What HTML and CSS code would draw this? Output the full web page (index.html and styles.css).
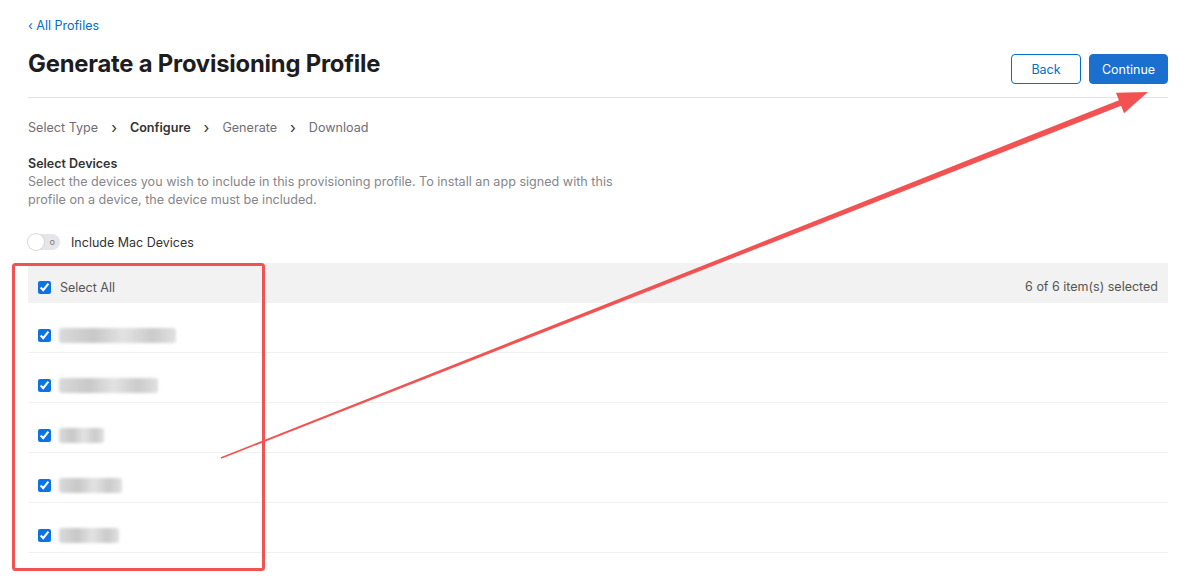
FILE: index.html
```html
<!DOCTYPE html>
<html lang="en">
<head>
    <meta charset="UTF-8">
    <meta name="viewport" content="width=device-width, initial-scale=1.0">
    <title>Generate a Provisioning Profile</title>
    <link rel="stylesheet" href="styles.css">
</head>
<body>
    <div id="page">
        <a class="back-link" href="#">&lsaquo; All Profiles</a>
        <div class="header">
            <h1>Generate a Provisioning Profile</h1>
            <div class="actions">
                <button class="btn btn-outline">Back</button>
                <button class="btn btn-primary">Continue</button>
            </div>
        </div>

        <div class="steps">
            <span>Select Type</span>
            <span class="chev">&rsaquo;</span>
            <span class="current">Configure</span>
            <span class="chev">&rsaquo;</span>
            <span>Generate</span>
            <span class="chev">&rsaquo;</span>
            <span>Download</span>
        </div>

        <div class="section">
            <h3>Select Devices</h3>
            <p>Select the devices you wish to include in this provisioning profile. To install an app signed with this profile on a device, the device must be included.</p>
        </div>

        <label class="toggle-row">
            <span class="toggle"><span class="knob"></span><span class="off">o</span></span>
            Include Mac Devices
        </label>

        <div class="device-table">
            <div class="table-head">
                <label class="check"><input type="checkbox" checked> Select All</label>
                <span class="count">6 of 6 item(s) selected</span>
            </div>
            <div class="row"><input type="checkbox" checked><span class="name" style="width:117px"></span></div>
            <div class="row"><input type="checkbox" checked><span class="name" style="width:99px"></span></div>
            <div class="row"><input type="checkbox" checked><span class="name" style="width:45px"></span></div>
            <div class="row"><input type="checkbox" checked><span class="name" style="width:63px"></span></div>
            <div class="row"><input type="checkbox" checked><span class="name" style="width:60px"></span></div>
        </div>
    </div>

    <!-- markup drawn on top: box round the list and arrow to Continue -->
    <svg class="markup" width="1192" height="587" viewBox="0 0 1192 587">
        <rect x="13.5" y="264.5" width="250" height="305" rx="2" fill="none" stroke="#f25252" stroke-width="3"/>
        <polygon fill="#f25252" points="220.7,457.3 1118.9,100.2 1116,92.8 1148,92 1124,113.2 1121.1,105.8 221.3,458.7"/>
    </svg>
</body>
</html>
```

FILE: styles.css
```css
body {
    margin: 0;
    font-family: Inter, "Noto Sans", sans-serif;
    color: #1d1d1f;
    background: #fff;
}
#page {
    padding: 17px 24px 0 28px;
}
.back-link {
    display: block;
    width: fit-content;
    font-size: 12.5px;
    color: #0070c9;
    text-decoration: none;
    line-height: 18px;
}
.header {
    display: flex;
    justify-content: space-between;
    align-items: flex-start;
    padding: 14px 0 13px;
    border-bottom: 1px solid #e3e3e3;
}
h1 {
    margin: 0;
    font-size: 23.8px;
    font-weight: 700;
    letter-spacing: -0.2px;
    line-height: 30px;
}
.actions {
    display: flex;
    gap: 8px;
    margin-top: 5px;
}
.btn {
    font-family: inherit;
    font-size: 12.5px;
    height: 30px;
    border-radius: 4px;
    cursor: pointer;
}
.btn-outline {
    width: 70px;
    background: #fff;
    color: #0070c9;
    border: 1px solid #0070c9;
}
.btn-primary {
    width: 79px;
    background: #1a6fcf;
    color: #fff;
    border: 1px solid #1a6fcf;
}
.steps {
    display: flex;
    align-items: center;
    gap: 13px;
    margin-top: 21px;
    font-size: 12.6px;
    color: #6e6e73;
    line-height: 18px;
}
.steps .chev {
    color: #333;
    font-size: 15px;
}
.steps .current {
    color: #333;
    font-weight: 600;
}
.section {
    margin-top: 18px;
}
.section h3 {
    margin: 0;
    font-size: 12.5px;
    font-weight: 600;
    color: #333;
    line-height: 18px;
}
.section p {
    margin: 0;
    max-width: 600px;
    font-size: 12.6px;
    line-height: 18px;
    color: #86868b;
}
.toggle-row {
    display: flex;
    align-items: center;
    gap: 11px;
    margin-top: 23px;
    font-size: 12.5px;
    color: #333;
    height: 20px;
}
.toggle {
    position: relative;
    width: 32px;
    height: 16px;
    border-radius: 8px;
    background: #e5e5ea;
    box-sizing: border-box;
}
.toggle .knob {
    position: absolute;
    left: 0;
    top: 0;
    width: 16px;
    height: 16px;
    border-radius: 50%;
    background: #fff;
    box-shadow: 0 0 0 1px #d6d6d6;
}
.toggle .off {
    position: absolute;
    right: 5px;
    top: 0;
    font-size: 9px;
    line-height: 15px;
    color: #777;
}
.device-table {
    margin-top: 11px;
}
.table-head {
    display: flex;
    justify-content: space-between;
    align-items: center;
    height: 40px;
    box-sizing: border-box;
    padding: 6px 10px 0;
    background: #f2f2f2;
    font-size: 12.5px;
    color: #555;
}
.check {
    display: flex;
    align-items: center;
    gap: 9px;
    padding-top: 2px;
}
input[type="checkbox"] {
    margin: 0;
    width: 13px;
    height: 13px;
    accent-color: #0a74e6;
}
.row {
    display: flex;
    align-items: center;
    gap: 8px;
    height: 50px;
    box-sizing: border-box;
    padding: 15px 10px 0;
    border-bottom: 1px solid #f0f0f0;
}
.row .name {
    height: 15px;
    border-radius: 3px;
    background: linear-gradient(90deg, #d9d9d9, #c8c8c8 30%, #e2e2e2 55%, #cbcbcb 80%, #e0e0e0);
    filter: blur(1.5px);
}
.markup {
    position: absolute;
    left: 0;
    top: 0;
    pointer-events: none;
}
```
